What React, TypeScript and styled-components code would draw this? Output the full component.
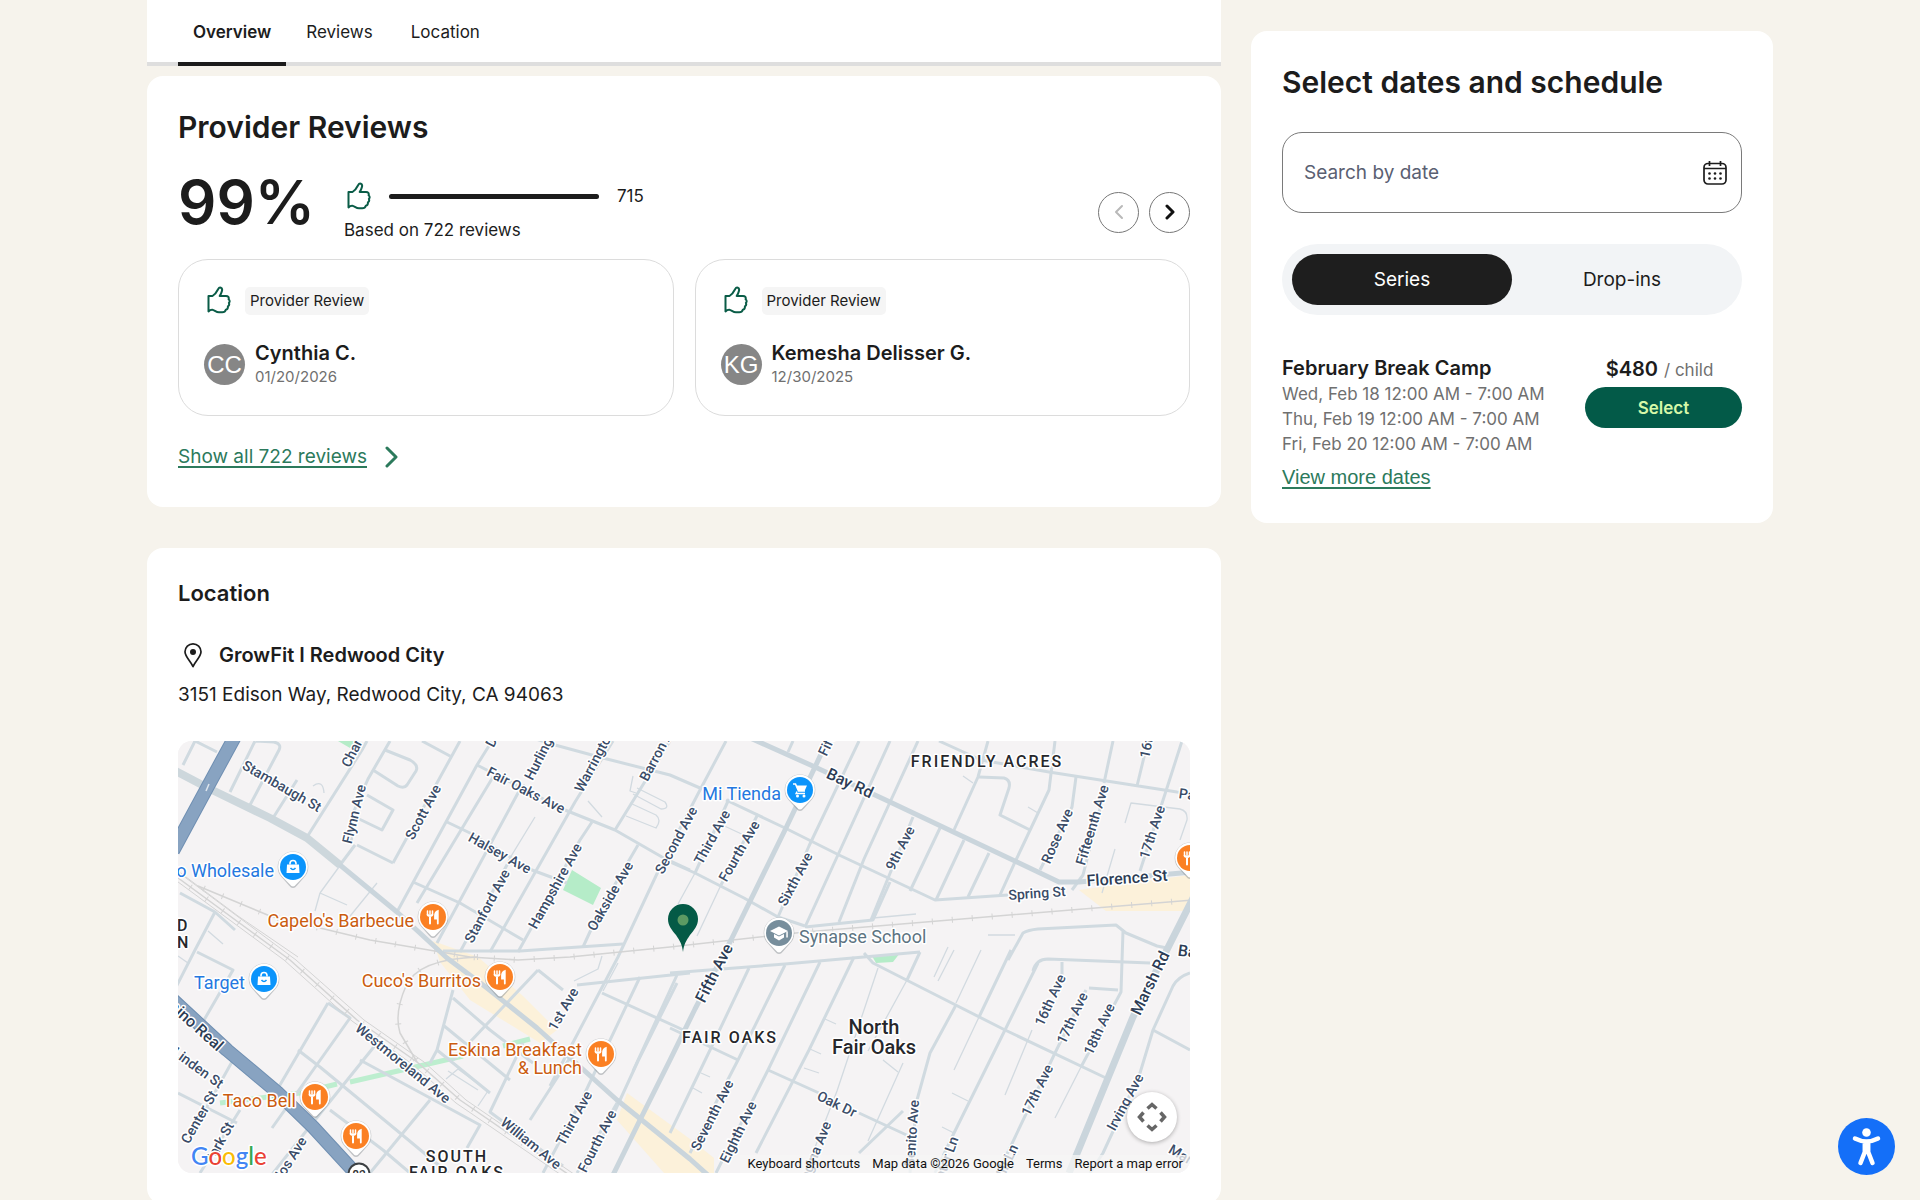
import React from "react";
import styled, { createGlobalStyle } from "styled-components";

const GlobalStyle = createGlobalStyle`
  *, *::before, *::after { box-sizing: border-box; }
  body {
    margin: 0;
    background: #f6f3ec;
    color: #1c1c1c;
    font-family: Inter, "Liberation Sans", sans-serif;
    font-size: 17px;
    line-height: 24px;
  }
  button, input { font: inherit; color: inherit; }
  h2, h3, p, ul { margin: 0; padding: 0; }
`;

/* ---------- page layout ---------- */

const Page = styled.div`
  display: grid;
  grid-template-columns: minmax(0, 1074fr) minmax(0, 522fr);
  column-gap: 30px;
  max-width: 1626px;
  margin: 0 auto;
  align-items: start;
`;

const Main = styled.main`
  display: flex;
  flex-direction: column;
`;

const Card = styled.section<{ $gapAbove?: number }>`
  background: #fff;
  border-radius: 16px;
  padding: 31px;
  margin-top: ${(p) => p.$gapAbove ?? 0}px;
`;

const Title = styled.h2`
  font-size: 30px;
  line-height: 40px;
  font-weight: 600;
`;

/* ---------- tabs ---------- */

const TabBar = styled.nav`
  display: flex;
  gap: 2px;
  height: 66px;
  padding: 0 31px;
  background: #fff;
  box-shadow: inset 0 -4px 0 #dedede;
`;

const Tab = styled.button<{ $active?: boolean }>`
  border: 0;
  border-bottom: 4px solid ${(p) => (p.$active ? "#1c1c1c" : "transparent")};
  background: none;
  padding: 2px ${(p) => (p.$active ? 15 : 18)}px 0;
  font-weight: ${(p) => (p.$active ? 600 : 400)};
  cursor: pointer;
`;

/* ---------- reviews ---------- */

const Summary = styled.div`
  display: flex;
  align-items: center;
  margin-top: 16px;
  height: 96px;
`;

const Score = styled.strong`
  font-size: 60px;
  line-height: 76px;
  font-weight: 600;
  width: 166px;
  padding-bottom: 18px;
`;

const Breakdown = styled.div`
  display: flex;
  flex-direction: column;
  gap: 8px;
  padding-top: 2px;
`;

const BarRow = styled.div`
  display: flex;
  align-items: center;
  height: 28px;
`;

const Track = styled.div`
  width: 210px;
  height: 5px;
  margin: 0 18px 0 16px;
  border-radius: 3px;
  background: #dedede;
`;

const Fill = styled.div`
  height: 100%;
  border-radius: 3px;
  background: #1c1c1c;
`;

const Arrows = styled.div`
  display: flex;
  gap: 10px;
  margin-left: auto;
  padding-top: 2px;
`;

const ArrowButton = styled.button`
  display: grid;
  place-items: center;
  width: 41px;
  height: 41px;
  padding: 0;
  border: 1px solid #777;
  border-radius: 50%;
  background: #fff;
  color: #111;
  &:disabled { color: #b9b9b9; }
`;

const ReviewGrid = styled.div`
  display: grid;
  grid-template-columns: 1fr 1fr;
  gap: 21px;
`;

const ReviewCard = styled.article`
  border: 1px solid #dcdcdc;
  border-radius: 30px;
  padding: 26px 25px 27px;
  height: 157px;
  display: flex;
  flex-direction: column;
  justify-content: space-between;
`;

const Row = styled.div<{ $gap: number }>`
  display: flex;
  align-items: center;
  gap: ${(p) => p.$gap}px;
`;

const Badge = styled.span`
  padding: 2px 5px;
  border-radius: 5px;
  background: #f5f5f5;
  font-size: 15px;
`;

const Avatar = styled.span`
  display: grid;
  place-items: center;
  width: 41px;
  height: 41px;
  border-radius: 50%;
  background: #868686;
  color: #fff;
  font: 24px/41px "Liberation Sans", Arial, sans-serif;
`;

const Author = styled.h3`
  font-size: 20px;
  line-height: 25px;
  font-weight: 600;
`;

const Muted = styled.p<{ $size?: number }>`
  color: #707070;
  font-size: ${(p) => p.$size ?? 17}px;
  line-height: ${(p) => (p.$size ? 22 : 25)}px;
`;

const TextLink = styled.a<{ $plain?: boolean }>`
  display: inline-flex;
  align-items: center;
  gap: 18px;
  color: #2c7a5c;
  font-size: ${(p) => (p.$plain ? 20 : 19)}px;
  line-height: 28px;
  font-family: ${(p) => (p.$plain ? '"Liberation Sans", Arial, sans-serif' : "inherit")};
  text-decoration: none;
  span { text-decoration: underline; text-underline-offset: 3px; text-decoration-thickness: 2px; }
`;

const LinkRow = styled.div`
  padding: 27px 0 5px;
`;

/* ---------- location ---------- */

const SectionTitle = styled.h2`
  font-size: 22px;
  line-height: 28px;
  font-weight: 600;
`;

const Venue = styled.div`
  display: flex;
  align-items: center;
  gap: 10px;
  margin-top: 34px;
  font-size: 20px;
  line-height: 28px;
  font-weight: 600;
`;

const Address = styled.p`
  margin-top: 12px;
  font-size: 19px;
  line-height: 28px;
`;

const MapFrame = styled.div`
  position: relative;
  height: 432px;
  margin-top: 32px;
  border-radius: 14px;
  overflow: hidden;
  background: #f5f3f4;
  font-family: Roboto, sans-serif;
  svg.map { display: block; width: 100%; height: 100%; }
`;

const MapFooter = styled.div`
  position: absolute;
  right: 0;
  bottom: 0;
  display: flex;
  gap: 12px;
  padding: 0 7px 0 8px;
  background: rgba(245, 245, 245, 0.75);
  font-size: 13px;
  line-height: 18px;
  color: #111;
  a, button { padding: 0; border: 0; background: none; color: inherit; text-decoration: none; }
`;

const CameraButton = styled.button`
  position: absolute;
  right: 13px;
  bottom: 31px;
  display: grid;
  place-items: center;
  width: 50px;
  height: 50px;
  padding: 0;
  border: 0;
  border-radius: 50%;
  background: #fff;
  color: #666;
  box-shadow: 0 1px 4px rgba(0, 0, 0, 0.3);
`;

/* ---------- schedule ---------- */

const Aside = styled.aside`
  padding-top: 31px;
`;

const DateField = styled.label`
  display: flex;
  align-items: center;
  height: 81px;
  margin-top: 30px;
  padding: 0 13px 0 21px;
  border: 1px solid #7a7a7a;
  border-radius: 20px;
  input {
    flex: 1;
    min-width: 0;
    border: 0;
    padding: 0;
    outline: 0;
    background: none;
    font-size: 19px;
  }
  input::placeholder { color: #5a6072; opacity: 1; }
`;

const Toggle = styled.div`
  display: grid;
  grid-template-columns: 1fr 1fr;
  margin-top: 31px;
  padding: 10px;
  border-radius: 36px;
  background: #f2f4f6;
`;

const ToggleButton = styled.button<{ $active?: boolean }>`
  height: 51px;
  border: 0;
  border-radius: 26px;
  background: ${(p) => (p.$active ? "#1e1e1e" : "transparent")};
  color: ${(p) => (p.$active ? "#fff" : "#1c1c1c")};
  font-size: 19px;
`;

const Session = styled.div`
  display: flex;
  justify-content: space-between;
  margin-top: 41px;
  padding-bottom: 1px;
`;

const SessionDates = styled.div`
  padding: 1px 0 6px;
`;

const Purchase = styled.div`
  display: flex;
  flex-direction: column;
  align-items: center;
  width: 157px;
`;

const Price = styled.p`
  display: flex;
  align-items: baseline;
  gap: 6px;
  padding-right: 8px;
  color: #707070;
  line-height: 26px;
  strong { font-size: 20px; font-weight: 600; color: #1c1c1c; }
`;

const SelectButton = styled.button`
  width: 100%;
  height: 41px;
  margin-top: 4px;
  border: 0;
  border-radius: 21px;
  background: #035a48;
  color: #d6f8a8;
  font-size: 17px;
  font-weight: 600;
`;

const AccessButton = styled.button`
  position: fixed;
  right: 25px;
  bottom: 25px;
  width: 57px;
  height: 57px;
  padding: 0;
  border: 0;
  border-radius: 50%;
  background: #146ff8;
  svg { display: block; }
`;

/* ---------- icons ---------- */

const ThumbIcon = () => (
  <svg width="29" height="29" viewBox="0 0 29 29" fill="none" stroke="#0a5c47" strokeWidth="2" strokeLinejoin="round" aria-hidden="true">
    <path d="M4.500 10h4c2.600-1.600 4.200-4 5.600-6.800.7-1.300 1.600-1.900 2.700-1.500 1.300.5 1.500 1.800 1.200 3-.4 1.900-1.300 3.600-2.300 5.300h6.300c2.200 0 3.200 1.400 2.600 3.200 1.300 1 1.400 2.600.3 3.700.6 1.500.2 2.800-1 3.500.2 1.900-.6 3-2.100 3.300-.5 1.700-1.700 2.600-3.500 2.600h-3.300c-3 0-4.500-2.200-6.700-2.500-1.400-.1-2.600.5-3.800 1.600z" />
  </svg>
);

const Chevron = ({ left, size, width }: { left?: boolean; size: number; width: number }) => (
  <svg width={size / 2 + 4} height={size + 4} viewBox={`0 0 ${size / 2 + 4} ${size + 4}`} fill="none" stroke="currentColor" strokeWidth={width} strokeLinecap="round" strokeLinejoin="round" aria-hidden="true">
    <path d={left ? `M${size / 2 + 2} 2L2 ${size / 2 + 2}l${size / 2} ${size / 2}` : `M2 2l${size / 2} ${size / 2}L2 ${size + 2}`} />
  </svg>
);

const CalendarIcon = () => (
  <svg width="26" height="26" viewBox="0 0 26 26" fill="none" stroke="#1c1c1c" strokeWidth="1.700" aria-hidden="true">
    <rect x="2" y="3.500" width="22" height="20.500" rx="4" />
    <path d="M2 8.500h22M7.500 1v5M18.500 1v5" />
    <g fill="#1c1c1c" stroke="none">
      {[7.5, 13, 18.5].map((x) => [13.5, 18.5].map((y) => <circle key={`${x}-${y}`} cx={x} cy={y} r="1.300" />))}
    </g>
  </svg>
);

const PlaceIcon = () => (
  <svg width="31" height="28" viewBox="0 0 31 28" fill="none" stroke="#1c1c1c" strokeWidth="1.700" strokeLinejoin="round" aria-hidden="true">
    <path d="M15 25.500C12 19.500 7 15.500 7 10.800a8 8 0 0 1 16 0c0 4.700-5 8.700-8 14.700z" />
    <circle cx="15" cy="11" r="3" fill="#1c1c1c" stroke="none" />
  </svg>
);

/* ---------- map data ---------- */

const arterials = [
  "M-8 27L30 47 92 77 129 97 162 124 219 171 269 217 309 247 359 287 439 359 512 418 532 436",
];
const majors = [
  "M570-4L637 26 712 61 786 96 839 121 881 141 901 141 1016 131",
  "M651-4L637 26 607 89 553 199 517 268 492 319 462 379 434 436",
];
const roads = [
  "M17 0L5 24M17 0L39 11M77 0L52 51M78 0L96 1Q104 3 101 9L72 64M189 0L184 9 129 96M119 39L95 77",
  "M212 0L190 38 176 70 173 102M179 104L215 122M177 104L162 124",
  "M207 9L232 19Q241 24 238 30L229 44Q226 48 220 45L195 29M189 54L215 69 204 89 179 77",
  "M282 0L215 122M244 0L272 15M314 0L299 24 219 171M315 36L239 162M347 44L340 52 259 202",
  "M330 122L282 211M435 0L397 61 312 211M414 81L402 99 340 211M460 104L422 169 405 206M492 0L437 89",
  "M299 24L387 69 437 89 484 116 512 129M269 81L292 92 354 129 389 142M235 141L282 162 345 199",
  "M345 -6L377 4 425 17 492 34 522 47M265 210L342 210 445 203M492 121L517 132 566 157 600 176 627 185",
  "M548 0L522 49 484 122 440 216 400 292 372 345M615 0L610 11M551 58L517 132M580 73L543 144",
  "M681 0L631 105 600 176M712 0L659 116 627 186M740 0L686 118 661 181M735 76L693 179M762 87L732 150",
  "M810 0L800 36 776 89M786 99L758 159M811 112L790 156M877 0L871 49 837 121 822 154",
  "M548 59L607 87 661 114 708 136 757 159 830 154M627 186L695 179 712 141",
  "M801 36L826 37Q833 39 831 47L822 74 852 89M761 0L803 19 871 31 999 51 1014 53M935 0L926 42M967 12L959 45",
  "M1004 0L988 50 962 130M898 36L894 66 862 129M928 44L905 134 894 149",
  "M830 219L845 192Q850 189 860 188L938 184 948 192 979 205 989 207M945 190L943 251 903 326",
  "M492 232L607 223 742 211M399 244L512 232M686 212L695 222 752 251 827 289 928 337",
  "M499 234L455 330M571 227L533 307 492 392M607 224L560 319 512 412M642 221L590 329 538 432M676 216L631 309 578 412",
  "M742 211L729 239M833 209L801 276M778 264L752 312 739 359 732 432M860 222L827 289 776 392 757 432",
  "M855 230Q858 218 870 218L972 222M884 221L884 240M908 249L877 312 820 432M911 247L940 249",
  "M1012 232Q1000 236 995 245L975 289 962 332 925 412 912 432M975 289L1012 309",
  "M590 329L641 352M681 372L735 397M492 287L560 319M725 370L681 412",
  "M19 211L55 229 22 286M2 152L37 171 17 209 -4 250M37 171L57 189",
  "M150 262L99 349M150 262L172 277 94 387M199 302L129 389 92 436",
  "M120 309L142 326 222 392 270 432M182 319L302 384 289 407M152 369L205 409 232 432M252 359L192 432",
  "M275 249L259 309 252 322M275 257L312 289 355 322M265 284L332 339M259 309L312 352M360 229L275 319M360 229L385 249",
  "M345 302L312 371 385 425M397 309L352 379M405 356L365 432M462 236L405 356M439 362L399 432",
  "M499 242L460 320 430 385 405 432M424 252L512 292M0 352L59 382M55 319L12 396M62 369L22 432",
];
const lanes = [
  "M357 76L329 122M459 47L487 61Q492 68 483 68L455 53M452 62L478 74Q484 79 478 87L448 75M455 35L452 50 458 52",
  "M135 45Q145 38 146 52M142 152L169 164M177 104L142 152M142 152L137 170M199 142L164 185M500 163L517 132M519 195L543 144",
  "M947 82L953 62 1002 68Q1010 70 1009 79L1002 99M937 108L924 152M695 177L738 173M410 60L424 76M785 35L795 42",
  "M700 227L659 350 627 432M801 276L776 329M803 209L778 262M854 289L827 354M903 326L877 377M725 322L690 400M729 239L690 310",
  "M776 209L760 240M647 278L658 283M632 308L643 313M626 327L641 332M705 319L720 331M774 352L790 360M764 386L776 392",
  "M523 332L532 336M515 347L524 352M425 250L440 222M396 240L420 228 424 215M810 194L837 194M770 206L756 236",
  "M270 330L300 349M268 338L280 328 310 350 300 365M30 190L45 203M0 215L10 222M540 82L570 96M850 66L860 72",
];
const rails = [
  "M1014 159L796 177 627 191 492 206 392 216 340 219 292 216 192 199 92 175 20 145",
  "M-4 134L112 219 179 279 239 321 282 359 400 440",
  "M300 216Q240 218 228 245T222 292L239 321",
];

type Label = [string, number, number, number, ("start" | "middle" | "end")?, number?];
const labels: Label[] = [
  ["Stambaugh St", 104, 45, 30],
  ["Charter St", 167, 25, -63, "start"],
  ["Flynn Ave", 176, 73, -76],
  ["Scott Ave", 245, 71, -62],
  ["Douglas Ave", 311, 5, -62, "start"],
  ["Hurlingame Ave", 350, 38, -63, "start"],
  ["Warrington Ave", 400, 50, -62, "start"],
  ["Barron Ave", 465, 39, -62, "start"],
  ["Fair Oaks Ave", 348, 49, 27],
  ["Halsey Ave", 322, 112, 29],
  ["Stanford Ave", 309, 165, -62],
  ["Hampshire Ave", 377, 145, -61],
  ["Oakside Ave", 432, 155, -60],
  ["Second Ave", 498, 99, -62],
  ["Third Ave", 534, 96, -61],
  ["Fourth Ave", 561, 110, -60],
  ["Sixth Ave", 617, 138, -62],
  ["9th Ave", 722, 107, -63],
  ["Fifth Ave", 644, 14, -65, "start"],
  ["Bay Rd", 672, 42, 25, "middle", 16],
  ["Rose Ave", 879, 95, -66],
  ["Fifteenth Ave", 914, 84, -73],
  ["17th Ave", 974, 91, -72],
  ["16th Ave", 966, 17, -78, "start"],
  ["Page St", 1001, 52, 8, "start"],
  ["Florence St", 949, 137, -4, "middle", 16],
  ["Spring St", 859, 152, -4],
  ["Bay Rd", 1000, 209, 8, "start", 16],
  ["Fifth Ave", 536, 232, -63, "middle", 16],
  ["El Camino Real", 43, 307, 42, "end", 16],
  ["Linden St", 44, 344, 36, "end"],
  ["Center St", 21, 376, -60],
  ["Park St", 52, 382, -61, "end"],
  ["Carlos Ave", 125, 397, -58, "end"],
  ["Westmoreland Ave", 225, 322, 39],
  ["William Ave", 353, 402, 39],
  ["1st Ave", 385, 268, -60],
  ["Third Ave", 396, 377, -61],
  ["Fourth Ave", 419, 400, -63],
  ["16th Ave", 872, 259, -65],
  ["17th Ave", 894, 277, -65],
  ["18th Ave", 921, 288, -65],
  ["Marsh Rd", 972, 242, -64, "middle", 16],
  ["17th Ave", 859, 349, -64],
  ["Irving Ave", 947, 361, -62],
  ["Seventh Ave", 534, 374, -63],
  ["Eighth Ave", 560, 391, -64],
  ["Oak Dr", 659, 363, 26],
  ["Regina Ave", 649, 381, -68, "end"],
  ["Benito Ave", 736, 359, -86, "end"],
  ["Water Ln", 776, 396, -70, "end"],
  ["Hill Ln", 836, 404, -65, "end"],
  ["Marlin Dr", 992, 407, 30, "start"],
];

type Kind = "bag" | "cart" | "food" | "school";
type Place = { kind: Kind; x: number; y: number; lines?: string[]; after?: boolean };
const places: Place[] = [
  { kind: "cart", x: 622, y: 49, lines: ["Mi Tienda"] },
  { kind: "bag", x: 115, y: 126, lines: ["Costco Wholesale"] },
  { kind: "food", x: 255, y: 176, lines: ["Capelo's Barbecue"] },
  { kind: "bag", x: 86, y: 238, lines: ["Target"] },
  { kind: "food", x: 322, y: 236, lines: ["Cuco's Burritos"] },
  { kind: "food", x: 423, y: 313, lines: ["Eskina Breakfast", "& Lunch"] },
  { kind: "food", x: 137, y: 356, lines: ["Taco Bell"] },
  { kind: "food", x: 178, y: 395 },
  { kind: "food", x: 1012, y: 117 },
  { kind: "school", x: 601, y: 192, lines: ["Synapse School"], after: true },
];

const pinColor: Record<Kind, string> = { bag: "#0b94fb", cart: "#0b94fb", food: "#fb8023", school: "#778e9c" };
const textColor: Record<Kind, string> = { bag: "#2478e0", cart: "#2478e0", food: "#cb5c10", school: "#5d7482" };

const Halo = styled.text`
  paint-order: stroke;
  stroke: #fff;
  stroke-width: 3px;
  stroke-linejoin: round;
  dominant-baseline: central;
`;

const District = styled(Halo)`
  font-size: 16px;
  font-weight: 500;
  letter-spacing: 2px;
  fill: #26272b;
  text-anchor: middle;
`;

const Glyph = ({ kind }: { kind: Kind }) => {
  if (kind === "food")
    return (
      <g fill="none" stroke="#fff" strokeLinecap="round">
        <path strokeWidth="1.500" d="M-5.500-6v4M-3-6v4M-.5-6v4" />
        <path strokeWidth="2" d="M-5.300-2.200Q-5-1-3-1T-.7-2.200M-3-1v7.500" />
        <path strokeWidth="1.800" fill="#fff" d="M4.800 6.500v-12.500q-2.800 1-2.800 4.500v3h2.800" />
      </g>
    );
  if (kind === "bag")
    return (
      <g>
        <path d="M-6-2.500h12l.5 8.500h-13z" fill="#fff" />
        <path d="M-3-2.500v-1a3 3 0 0 1 6 0v1" fill="none" stroke="#fff" strokeWidth="1.600" />
        <path d="M-2.500 1q2.500 3 5 0" fill="none" stroke="#0b94fb" strokeWidth="1.500" />
      </g>
    );
  if (kind === "cart")
    return (
      <g fill="#fff">
        <path d="M-7-6h2.500l3 7h6.500" fill="none" stroke="#fff" strokeWidth="1.600" />
        <path d="M-4-4.500h11l-2.500 5.500h-6z" />
        <path d="M-3 1.500l-1 2h9" fill="none" stroke="#fff" strokeWidth="1.300" />
        <circle cx="-2.500" cy="6" r="1.500" />
        <circle cx="4" cy="6" r="1.500" />
      </g>
    );
  return (
    <g fill="#fff">
      <path d="M0-6.500l9 4.500-9 4.500-9-4.500z" />
      <path d="M-5 1v3.500l5 3 5-3v-3.500l-5 2.600zM7.300-1.500h1.500v6h-1.500z" />
    </g>
  );
};

const PlaceMarker = ({ place }: { place: Place }) => {
  const { kind, x, y, lines = [], after } = place;
  return (
    <g>
      {lines.map((line, i) => (
        <Halo
          key={line}
          x={after ? x + 20 : x - 19}
          y={y + 3 + i * 18 - (lines.length > 1 ? 8 : 0)}
          fontSize="18"
          textAnchor={after ? "start" : "end"}
          fill={textColor[kind]}
        >
          {line}
        </Halo>
      ))}
      <g transform={`translate(${x} ${y})`}>
        <path d="M0 21Q-2 21-4 18.500L-11 10.500A15.300 15.300 0 1 1 11 10.500L4 18.500Q2 21 0 21z" fill="#8a8f94" opacity=".5" />
        <path d="M0 19.500Q-1.500 19.500-3.500 17L-10.500 10A14.800 14.800 0 1 1 10.500 10L3.500 17Q1.500 19.500 0 19.500z" fill="#fff" />
        <circle r="13" fill={pinColor[kind]} />
        <Glyph kind={kind} />
      </g>
    </g>
  );
};

const StreetMap = () => (
  <svg className="map" viewBox="0 0 1012 432" preserveAspectRatio="xMidYMid slice" role="img" aria-label="Map of Redwood City">
    <rect width="1012" height="432" fill="#f5f3f4" />
    <g fill="#fcf1da">
      <path d="M901 149L1012 134V170H928z" />
      <path d="M255 200L300 216 345 255 379 289 362 302 292 259 262 221z" />
      <path d="M449 352L512 398 536 417V432H486L439 379z" />
    </g>
    <g fill="#b5ecc8">
      <path d="M394 129L423 147 415 164 385 149zM160 0h18l-6 7zM694 215l28-3-7 9-17 1z" />
    </g>
    <path d="M42 362L122 352 159 343M172 341L285 315M325 305L352 298" stroke="#bdeecf" strokeWidth="5" fill="none" />
    <g fill="none" strokeLinejoin="round">
      {lanes.map((d) => <path key={d} d={d} stroke="#d2dae0" strokeWidth="1.300" />)}
      {roads.map((d) => <path key={d} d={d} stroke="#d0dae0" strokeWidth="3" />)}
      {rails.map((d) => (
        <g key={d} stroke="#d4d4d4">
          <path d={d} strokeWidth="1.500" />
          <path d={d} strokeWidth="6" strokeDasharray="1 19" />
        </g>
      ))}
      <g stroke="#d4d4d4" strokeWidth="1">
        <path d="M4 134L118 219 186 279 246 321 288 359 406 440M-4 138L106 219 174 280 234 323 278 362 392 440M0 130L60 175 120 216" />
      </g>
      {majors.map((d) => <path key={d} d={d} stroke="#cad5dc" strokeWidth="5" />)}
      {arterials.map((d) => <path key={d} d={d} stroke="#cad5dc" strokeWidth="5" />)}
      <path d="M-8 27L30 47 92 77 129 97 162 124" stroke="#cdd7dc" strokeWidth="8" />
      <path d="M1016 155L955 276 891 432" stroke="#cad5dc" strokeWidth="7" />
      <path d="M60-10L29 47-5 110" stroke="#6f8fb2" strokeWidth="14" />
      <path d="M60-10L29 47-5 110" stroke="#88a3c1" strokeWidth="12" />
      <path d="M-6 258L49 309 99 351 135 386 181 436" stroke="#6f8fb2" strokeWidth="14" />
      <path d="M-6 258L49 309 99 351 135 386 181 436" stroke="#88a3c1" strokeWidth="12" />
      <path d="M28 50l3-7" stroke="#dfe7ee" strokeWidth="1.500" />
    </g>
    <circle cx="181" cy="433" r="10.500" fill="#fff" stroke="#3c4043" strokeWidth="2" />
    <Halo x="181" y="434" fontSize="12" fontWeight="500" fill="#333" textAnchor="middle">82</Halo>
    <g fill="#3a4c68" fontWeight="500">
      {labels.map(([text, x, y, angle, anchor = "middle", size = 14]) => (
        <Halo key={`${text}${x}`} transform={`translate(${x} ${y}) rotate(${angle})`} fontSize={size} textAnchor={anchor} fill={size > 14 ? "#2c3c55" : undefined}>
          {text}
        </Halo>
      ))}
    </g>
    <District x="809" y="20">FRIENDLY ACRES</District>
    <District x="552" y="296">FAIR OAKS</District>
    <District x="279" y="415">SOUTH</District>
    <District x="279" y="431">FAIR OAKS</District>
    <g fill="#26272b" fontWeight="500">
      <Halo x="696" y="286" fontSize="20" textAnchor="middle">North</Halo>
      <Halo x="696" y="306" fontSize="20" textAnchor="middle">Fair Oaks</Halo>
      <Halo x="-1" y="184" fontSize="16">D</Halo>
      <Halo x="-1" y="201" fontSize="16">N</Halo>
    </g>
    {places.map((p) => <PlaceMarker key={`${p.x}-${p.y}`} place={p} />)}
    <g>
      <path d="M505 211c-1-8-3-11-7-17-4-5-8-9-8-16a15 15 0 0 1 30 0c0 7-4 11-8 16-4 6-6 9-7 17z" fill="#045a46" />
      <circle cx="505" cy="179" r="5.500" fill="#5c9a63" />
    </g>
    <Halo x="13" y="414" fontSize="24" fontFamily="Lato, sans-serif" fontWeight="500">
      <tspan fill="#4285f4">G</tspan><tspan fill="#ea4335">o</tspan><tspan fill="#fbbc05">o</tspan><tspan fill="#4285f4">g</tspan><tspan fill="#34a853">l</tspan><tspan fill="#ea4335">e</tspan>
    </Halo>
  </svg>
);

/* ---------- page ---------- */

const reviews = [
  { initials: "CC", name: "Cynthia C.", date: "01/20/2026" },
  { initials: "KG", name: "Kemesha Delisser G.", date: "12/30/2025" },
];

const sessions = [
  "Wed, Feb 18 12:00 AM - 7:00 AM",
  "Thu, Feb 19 12:00 AM - 7:00 AM",
  "Fri, Feb 20 12:00 AM - 7:00 AM",
];

export default function App() {
  return (
    <>
      <GlobalStyle />
      <Page>
        <Main>
          <TabBar>
            <Tab $active>Overview</Tab>
            <Tab>Reviews</Tab>
            <Tab>Location</Tab>
          </TabBar>

          <Card $gapAbove={10}>
            <Title>Provider Reviews</Title>
            <Summary>
              <Score>99%</Score>
              <Breakdown>
                <BarRow>
                  <ThumbIcon />
                  <Track><Fill style={{ width: "100%" }} /></Track>
                  <span>715</span>
                </BarRow>
                <p>Based on 722 reviews</p>
              </Breakdown>
              <Arrows>
                <ArrowButton disabled aria-label="Previous reviews"><Chevron left size={12} width={2} /></ArrowButton>
                <ArrowButton aria-label="Next reviews"><Chevron size={12} width={3} /></ArrowButton>
              </Arrows>
            </Summary>
            <ReviewGrid>
              {reviews.map((r) => (
                <ReviewCard key={r.name}>
                  <Row $gap={12}>
                    <ThumbIcon />
                    <Badge>Provider Review</Badge>
                  </Row>
                  <Row $gap={10}>
                    <Avatar>{r.initials}</Avatar>
                    <div>
                      <Author>{r.name}</Author>
                      <Muted $size={15}>{r.date}</Muted>
                    </div>
                  </Row>
                </ReviewCard>
              ))}
            </ReviewGrid>
            <LinkRow>
              <TextLink href="#reviews"><span>Show all 722 reviews</span><Chevron size={18} width={3} /></TextLink>
            </LinkRow>
          </Card>

          <Card $gapAbove={41}>
            <SectionTitle>Location</SectionTitle>
            <Venue><PlaceIcon />GrowFit I Redwood City</Venue>
            <Address>3151 Edison Way, Redwood City, CA 94063</Address>
            <MapFrame>
              <StreetMap />
              <MapFooter>
                <button type="button">Keyboard shortcuts</button>
                <span>Map data ©2026 Google</span>
                <a href="#terms">Terms</a>
                <a href="#report">Report a map error</a>
              </MapFooter>
              <CameraButton aria-label="Map camera controls">
                <svg width="30" height="30" viewBox="0 0 30 30" fill="none" stroke="currentColor" strokeWidth="3.500" aria-hidden="true">
                  <path d="M10.500 6.500L15 2.500l4.500 4M10.500 23.500l4.500 4 4.500-4M6.500 10.500L2.500 15l4 4.500M23.500 10.500l4 4.500-4 4.500" />
                </svg>
              </CameraButton>
            </MapFrame>
          </Card>
        </Main>

        <Aside>
          <Card>
            <Title>Select dates and schedule</Title>
            <DateField>
              <input type="text" placeholder="Search by date" aria-label="Search by date" />
              <CalendarIcon />
            </DateField>
            <Toggle>
              <ToggleButton $active>Series</ToggleButton>
              <ToggleButton>Drop-ins</ToggleButton>
            </Toggle>
            <Session>
              <div>
                <Author>February Break Camp</Author>
                <SessionDates>
                  {sessions.map((s) => <Muted key={s}>{s}</Muted>)}
                </SessionDates>
                <TextLink $plain href="#dates"><span>View more dates</span></TextLink>
              </div>
              <Purchase>
                <Price><strong>$480</strong>/ child</Price>
                <SelectButton>Select</SelectButton>
              </Purchase>
            </Session>
          </Card>
        </Aside>
      </Page>
      <AccessButton aria-label="Accessibility options">
        <svg width="57" height="57" viewBox="0 0 57 57" fill="none" stroke="#fff" strokeWidth="4.500" strokeLinecap="round" strokeLinejoin="round" aria-hidden="true">
          <circle cx="28.500" cy="14.500" r="4.300" fill="#fff" stroke="none" />
          <path d="M17 20.500Q23 23.500 28.500 23.500T40 20.500M26.800 24v10L22.500 45M30.200 24v10l4.300 11M28.500 24v8" />
        </svg>
      </AccessButton>
    </>
  );
}
